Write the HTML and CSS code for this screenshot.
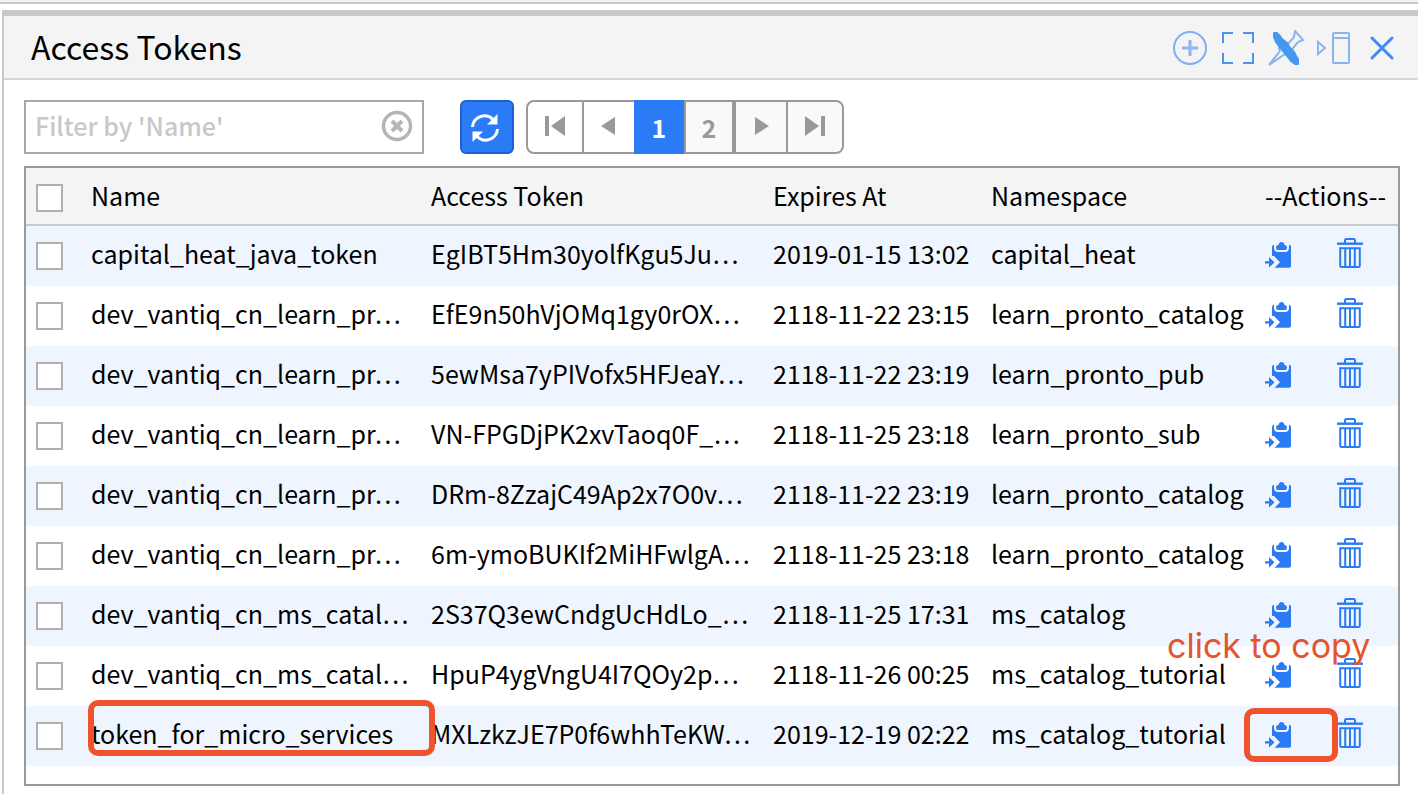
FILE: index.html
```html
<!DOCTYPE html>
<html lang="en">
<head>
<meta charset="utf-8">
<title>Access Tokens</title>
<link rel="stylesheet" href="styles.css">
</head>
<body>
<svg class="sprite" aria-hidden="true">
  <symbol id="i-copy" viewBox="0 0 28 30">
    <path d="M9 6.500Q7 7 7 9V18H9L15 24.200 9.500 29.800H24Q26 29.800 26 27.800V9Q26 7 24 6.500V9.500Q24 14 20 14H13Q9 14 9 9.500Z"/>
    <path d="M11 9.500Q11 7 13.500 7 14 4 16.500 4 19 4 19.500 7 22 7 22 9.500 22 12 20 12H13Q11 12 11 9.500Z"/>
    <path d="M0 23.200H4V19L9.500 24.300 4 29.600V25.400H0Z"/>
  </symbol>
  <symbol id="i-trash" viewBox="0 0 26 30">
    <g fill="none" stroke="currentColor" stroke-width="2">
      <path d="M0 5.700H26" stroke-width="2.400"/>
      <path d="M8 5V2.500Q8 1 9.500 1H16.500Q18 1 18 2.500V5M3.200 10.300H22.800V27.500Q22.800 29 21.300 29H4.700Q3.200 29 3.200 27.500ZM8.200 10V29M13 10V29M17.800 10V29"/>
    </g>
  </symbol>
</svg>
<div class="topbar"></div>
<main class="panel">
  <header class="panel-head">
    <h1>Access Tokens</h1>
    <div class="tools">
      <button type="button" aria-label="Add"><svg viewBox="0 0 36 36"><circle cx="18" cy="18" r="16" stroke="#7fb0f2"/><path d="M18 10V26M10 18H26" stroke="#8ab6f2" stroke-width="3"/></svg></button>
      <button type="button" aria-label="Maximize"><svg viewBox="0 0 36 36"><path d="M3 13V3H13M23 3H33V13M33 23V33H23M13 33H3V23" stroke="#4b93f0"/></svg></button>
      <button type="button" aria-label="Unpin"><svg viewBox="0 0 36 36"><path d="M1 35L12 21Q9 16 15 15L21 13 26 7 27 1 35 10 30 12 25 18 22 24Q20 27 17 24Z" stroke="#8ab4ee"/><path d="M6 3L9 3 12 6 14 9 19 13 22 18 26 22 28 26 30 29 30 34 27 34 23 31 19 26 15 21 11 16 8 12 6 7Z" fill="#4598ee" stroke="#4598ee" stroke-linejoin="round"/></svg></button>
      <button type="button" aria-label="Dock"><svg viewBox="0 0 36 36"><path d="M2 12V24L9 18ZM18 3H32Q33 3 33 4V32Q33 33 32 33H18Q17 33 17 32V4Q17 3 18 3ZM17 8H33" stroke="#8ab4ee"/></svg></button>
      <button type="button" aria-label="Close"><svg viewBox="0 0 36 36"><path d="M8 8L28 28M28 8L8 28" stroke="#3e8af2" stroke-width="3" stroke-linecap="round"/></svg></button>
    </div>
  </header>
  <div class="content">
    <div class="toolbar">
      <div class="filter">
        <input type="text" placeholder="Filter by 'Name'" aria-label="Filter by Name">
        <button type="button" aria-label="Clear filter"><svg viewBox="0 0 32 32"><circle cx="16" cy="16" r="13.500" stroke-width="3.500"/><path d="M11 11L21 21M21 11L11 21" stroke-width="4"/></svg></button>
      </div>
      <button class="refresh" type="button" aria-label="Refresh"><svg viewBox="0 0 28 28"><path d="M1.500 13A12 12 0 0 1 22 5.500M26.500 15A12 12 0 0 1 6 22.500" fill="none" stroke="#fff" stroke-width="3"/><path d="M26.500 0V10.500H16ZM1.500 28V17.500H12Z" fill="#fff"/></svg></button>
      <nav class="pager" aria-label="Pages">
        <button class="first" type="button" aria-label="First page"><svg viewBox="0 0 20 20"><path d="M0 0H4V20H0ZM20 0V20L6 10Z"/></svg></button>
        <button class="prev" type="button" aria-label="Previous page"><svg viewBox="0 0 20 20"><path d="M16 1V19L2 10Z"/></svg></button>
        <button class="current" type="button" aria-current="page">1</button>
        <button class="page" type="button">2</button>
        <button class="next" type="button" aria-label="Next page"><svg viewBox="0 0 20 20"><path d="M4 1V19L18 10Z"/></svg></button>
        <button class="last" type="button" aria-label="Last page"><svg viewBox="0 0 20 20"><path d="M16 0H20V20H16ZM0 0V20L14 10Z"/></svg></button>
      </nav>
    </div>
    <div class="grid">
      <table>
        <colgroup><col class="c-check"><col class="c-name"><col class="c-token"><col class="c-date"><col class="c-space"><col class="c-act"></colgroup>
        <thead><tr><th class="check"><input type="checkbox" aria-label="Select all"></th><th>Name</th><th>Access Token</th><th>Expires At</th><th>Namespace</th><th>--Actions--</th></tr></thead>
        <tbody>
          <tr><td class="check"><input type="checkbox" aria-label="Select row 1"></td><td>capital_heat_java_token</td><td>EgIBT5Hm30yolfKgu5Ju…</td><td>2019-01-15 13:02</td><td>capital_heat</td><td class="act"><div class="acts"><button type="button" aria-label="Copy token"><svg class="copy"><use href="#i-copy"/></svg></button><button type="button" aria-label="Delete token"><svg class="trash"><use href="#i-trash"/></svg></button></div></td></tr>
          <tr><td class="check"><input type="checkbox" aria-label="Select row 2"></td><td>dev_vantiq_cn_learn_pr…</td><td>EfE9n50hVjOMq1gy0rOX…</td><td>2118-11-22 23:15</td><td>learn_pronto_catalog</td><td class="act"><div class="acts"><button type="button" aria-label="Copy token"><svg class="copy"><use href="#i-copy"/></svg></button><button type="button" aria-label="Delete token"><svg class="trash"><use href="#i-trash"/></svg></button></div></td></tr>
          <tr><td class="check"><input type="checkbox" aria-label="Select row 3"></td><td>dev_vantiq_cn_learn_pr…</td><td>5ewMsa7yPIVofx5HFJeaY…</td><td>2118-11-22 23:19</td><td>learn_pronto_pub</td><td class="act"><div class="acts"><button type="button" aria-label="Copy token"><svg class="copy"><use href="#i-copy"/></svg></button><button type="button" aria-label="Delete token"><svg class="trash"><use href="#i-trash"/></svg></button></div></td></tr>
          <tr><td class="check"><input type="checkbox" aria-label="Select row 4"></td><td>dev_vantiq_cn_learn_pr…</td><td>VN-FPGDjPK2xvTaoq0F_…</td><td>2118-11-25 23:18</td><td>learn_pronto_sub</td><td class="act"><div class="acts"><button type="button" aria-label="Copy token"><svg class="copy"><use href="#i-copy"/></svg></button><button type="button" aria-label="Delete token"><svg class="trash"><use href="#i-trash"/></svg></button></div></td></tr>
          <tr><td class="check"><input type="checkbox" aria-label="Select row 5"></td><td>dev_vantiq_cn_learn_pr…</td><td>DRm-8ZzajC49Ap2x7O0v…</td><td>2118-11-22 23:19</td><td>learn_pronto_catalog</td><td class="act"><div class="acts"><button type="button" aria-label="Copy token"><svg class="copy"><use href="#i-copy"/></svg></button><button type="button" aria-label="Delete token"><svg class="trash"><use href="#i-trash"/></svg></button></div></td></tr>
          <tr><td class="check"><input type="checkbox" aria-label="Select row 6"></td><td>dev_vantiq_cn_learn_pr…</td><td>6m-ymoBUKIf2MiHFwlgA…</td><td>2118-11-25 23:18</td><td>learn_pronto_catalog</td><td class="act"><div class="acts"><button type="button" aria-label="Copy token"><svg class="copy"><use href="#i-copy"/></svg></button><button type="button" aria-label="Delete token"><svg class="trash"><use href="#i-trash"/></svg></button></div></td></tr>
          <tr><td class="check"><input type="checkbox" aria-label="Select row 7"></td><td>dev_vantiq_cn_ms_catal…</td><td>2S37Q3ewCndgUcHdLo_…</td><td>2118-11-25 17:31</td><td>ms_catalog</td><td class="act"><div class="acts"><button type="button" aria-label="Copy token"><svg class="copy"><use href="#i-copy"/></svg></button><button type="button" aria-label="Delete token"><svg class="trash"><use href="#i-trash"/></svg></button></div></td></tr>
          <tr><td class="check"><input type="checkbox" aria-label="Select row 8"></td><td>dev_vantiq_cn_ms_catal…</td><td>HpuP4ygVngU4I7QOy2p…</td><td>2118-11-26 00:25</td><td>ms_catalog_tutorial</td><td class="act"><div class="acts"><button type="button" aria-label="Copy token"><svg class="copy"><use href="#i-copy"/></svg></button><button type="button" aria-label="Delete token"><svg class="trash"><use href="#i-trash"/></svg></button></div><span class="note">click to copy</span></td></tr>
          <tr><td class="check"><input type="checkbox" aria-label="Select row 9"></td><td class="marked">token_for_micro_services<span class="mark mark-name"></span></td><td>MXLzkzJE7P0f6whhTeKW…</td><td>2019-12-19 02:22</td><td>ms_catalog_tutorial</td><td class="act"><div class="acts"><button type="button" aria-label="Copy token"><svg class="copy"><use href="#i-copy"/></svg></button><button type="button" aria-label="Delete token"><svg class="trash"><use href="#i-trash"/></svg></button></div><span class="mark mark-copy"></span></td></tr>
        </tbody>
      </table>
    </div>
  </div>
</main>
</body>
</html>
```
FILE: styles.css
```css
* { box-sizing: border-box; }
body {
  margin: 0;
  min-height: 100vh;
  display: flex;
  flex-direction: column;
  background: #fff;
  color: #000;
  font: 25px/36px "Noto Sans CJK KR", "Noto Sans", sans-serif;
}
button { margin: 0; padding: 0; border: 0; background: none; color: inherit; font: inherit; cursor: pointer; }
svg { display: block; }
.sprite { position: absolute; width: 0; height: 0; }
.topbar { height: 4px; background: #f3f3f3; border-bottom: 2px solid #c9c9cd; }
.panel {
  flex: 1;
  margin: 6px 0 0 2px;
  border-top: 6px solid #c9c9c9;
  border-left: 2px solid #c9c9c9;
}
.panel-head {
  display: flex;
  align-items: center;
  justify-content: space-between;
  height: 64px;
  padding: 0 18px 0 27px;
  background: #f4f4f4;
  border-bottom: 2px solid #d3d7d9;
}
h1 { margin: 0; padding-bottom: 2px; font-size: 32px; font-weight: 400; line-height: 48px; }
.tools { display: flex; gap: 12px; padding-top: 2px; }
.tools svg { width: 36px; height: 36px; fill: none; stroke-width: 2px; }
.tools path[stroke-width="3"] { stroke-width: 3px; }
.content { padding: 20px 18px 8px 20px; }
.toolbar { display: flex; align-items: center; height: 54px; margin-bottom: 12px; }
.filter {
  display: flex;
  align-items: center;
  width: 400px;
  height: 54px;
  padding: 0 9px 2px;
  border: 2px solid #a8a8a8;
}
.filter input {
  flex: 1;
  min-width: 0;
  padding: 0 0 2px;
  border: 0;
  outline: 0;
  background: none;
  font: inherit;
  font-weight: 500;
}
.filter input::placeholder { color: #c8c8c8; opacity: 1; }
.filter svg { width: 32px; height: 32px; fill: none; stroke: #b5b5b5; }
.refresh {
  display: grid;
  place-items: center;
  width: 54px;
  height: 54px;
  margin: 0 12px 0 36px;
  padding: 2px 4px 0 0;
  border: 2px solid #1d60d2;
  border-radius: 6px;
  background: #2b7bf6;
}
.refresh svg { width: 28px; height: 28px; }
.pager { display: flex; height: 54px; }
.pager button {
  display: grid;
  place-items: center;
  width: 50px;
  border: solid #999;
  border-width: 2px 0;
  color: #999;
  font-weight: 700;
}
.pager svg { width: 20px; height: 20px; margin-bottom: 2px; fill: #999; }
.pager .first { width: 58px; border-width: 2px; border-radius: 8px 0 0 8px; }
.pager .current { border-color: #2b7bf6; background: #2b7bf6; color: #fff; }
.pager .page { border-width: 2px; background: #f9f9f9; }
.pager .next { width: 54px; border-width: 2px; background: #f9f9f9; }
.pager .last { width: 56px; border-width: 2px 2px 2px 0; border-radius: 0 8px 8px 0; background: #f9f9f9; }
.grid { padding-bottom: 18px; border: 2px solid #999; }
table { width: 100%; border-collapse: separate; border-spacing: 0; table-layout: fixed; }
.c-check { width: 65px; }
.c-token { width: 342px; }
.c-date { width: 218px; }
.c-space { width: 274px; }
.c-act { width: 133px; }
th, td { height: 60px; padding: 0 0 6px; text-align: left; font-weight: 400; white-space: nowrap; }
th { height: 58px; padding-bottom: 2px; background: #f4f4f4; border-bottom: 2px solid #c9c9c9; }
tbody tr:nth-child(odd) { background: #eef5fe; }
.check { padding: 0 0 0 10px; }
th.check { padding-top: 4px; }
.check input {
  display: block;
  width: 27px;
  height: 28px;
  margin: 0;
  appearance: none;
  border: 2px solid #b0b0b0;
  background: #fff;
}
.act, .marked { position: relative; }
.acts { display: flex; gap: 44px; color: #2b7bf6; }
.acts svg { height: 30px; fill: currentColor; }
.copy { width: 28px; }
.trash { width: 26px; }
.mark { position: absolute; z-index: 1; border: 6px solid #f0532b; border-radius: 10px; pointer-events: none; }
.mark-name { left: -3px; top: -6px; width: 347px; height: 56px; }
.mark-copy { left: -21px; top: 2px; width: 94px; height: 54px; }
.note {
  position: absolute;
  z-index: 1;
  left: -98px;
  top: -20px;
  color: #e4552f;
  font: 34px/40px Inter, sans-serif;
  pointer-events: none;
}
```
